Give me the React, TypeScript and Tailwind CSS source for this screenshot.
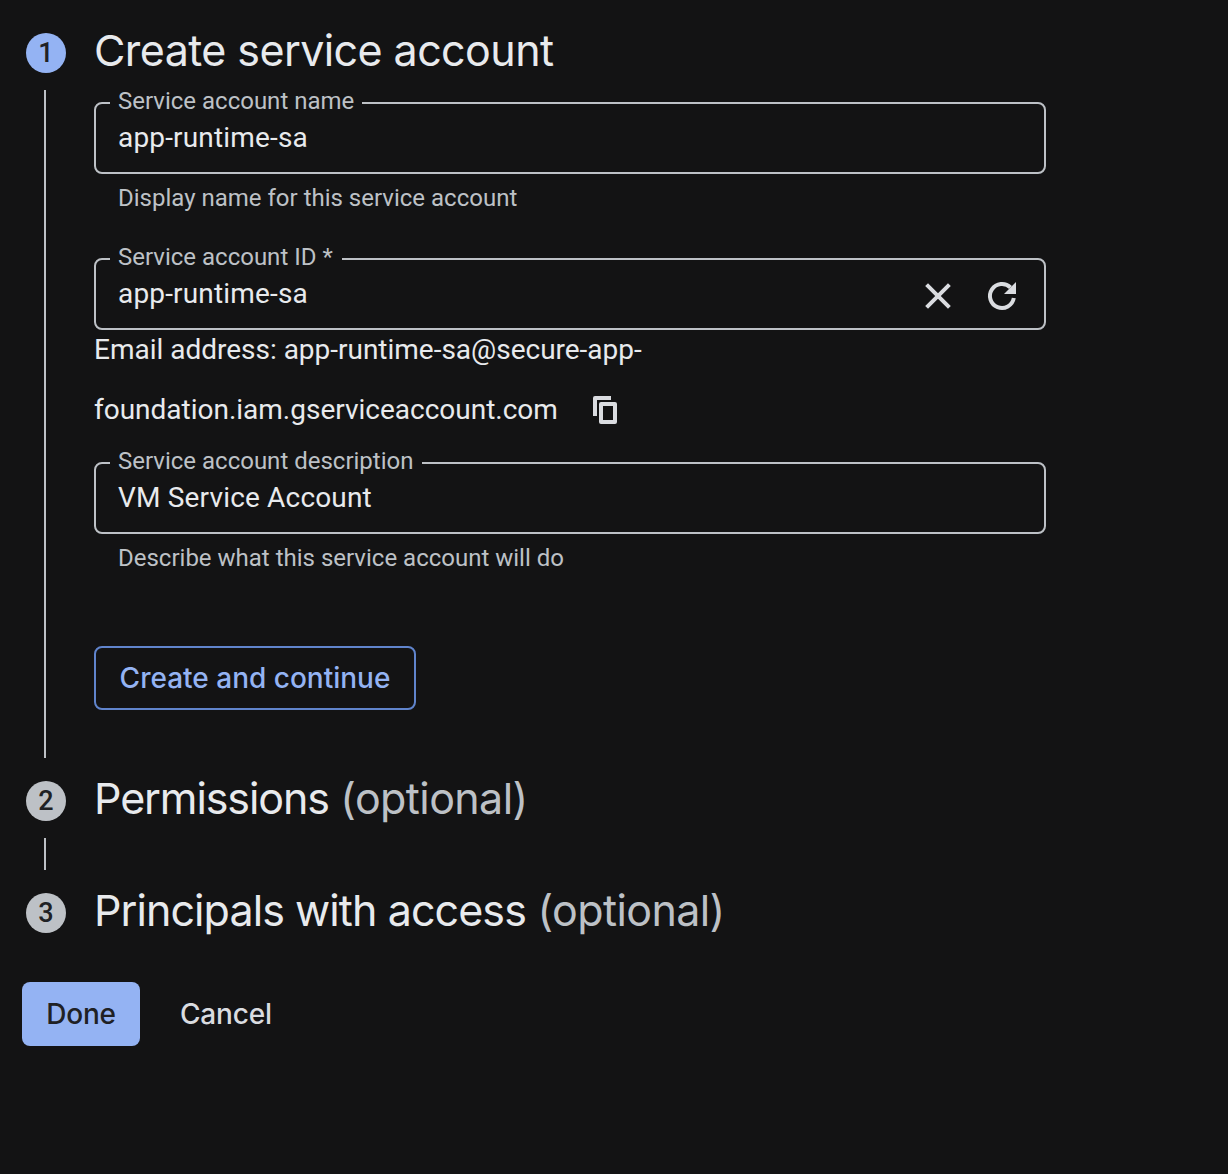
import React from "react";

function StepBadge({ step, active = false }: { step: number; active?: boolean }) {
  return (
    <span
      className={`flex h-10 w-10 items-center justify-center rounded-full text-[27px] font-medium leading-none text-[#202124] ${
        active ? "bg-[#94b3f3]" : "bg-[#bdc1c6]"
      }`}
    >
      {step}
    </span>
  );
}

function Step({
  step,
  title,
  optional = false,
  active = false,
  connector,
  tracking,
  children,
}: {
  step: number;
  title: string;
  optional?: boolean;
  active?: boolean;
  connector?: string;
  tracking: string;
  children?: React.ReactNode;
}) {
  return (
    <section className="flex">
      <div className="flex w-[94px] shrink-0 flex-col pt-[11px] pl-[26px]">
        <StepBadge step={step} active={active} />
        {connector && <div className={`mt-[17px] ml-[18px] w-[2px] bg-[#bdc1c6] ${connector}`} />}
      </div>
      <div>
        <h2
          className={`font-[Inter,sans-serif] text-[43px] leading-[56px] font-normal whitespace-nowrap text-[#e8eaed] ${tracking}`}
        >
          {title}
          {optional && <span className="tracking-[-0.6px] text-[#bdc1c6]"> (optional)</span>}
        </h2>
        {children}
      </div>
    </section>
  );
}

function Field({ label, value, notch, children }: { label: string; value: string; notch: string; children?: React.ReactNode }) {
  return (
    <fieldset className="flex h-[83px] w-[952px] items-start rounded-lg border-2 border-[#bdc1c6] pr-6 pl-[14px]">
      <legend className={`h-6 pl-2 text-2xl leading-5 whitespace-nowrap text-[#bdc1c6] ${notch}`}>{label}</legend>
      <span className="flex-1 pl-2 text-[28px] leading-[46px] tracking-[0.17px] text-[#e8eaed]">{value}</span>
      {children}
    </fieldset>
  );
}

function Hint({ children }: { children: React.ReactNode }) {
  return <p className="mt-3 pl-6 text-2xl leading-6 text-[#bdc1c6]">{children}</p>;
}

function ClearIcon() {
  return (
    <svg width="36" height="36" viewBox="0 0 36 36" fill="none" stroke="#dadce0" strokeWidth="4">
      <path d="M6.6 6.6 29.4 29.4M29.4 6.6 6.6 29.4" />
    </svg>
  );
}

function RefreshIcon() {
  return (
    <svg width="36" height="36" viewBox="0 0 36 36" fill="none">
      <path d="M29.8 20A12 12 0 1 1 26.5 9.5" stroke="#dadce0" strokeWidth="4" />
      <path d="M32 4V16H20Z" fill="#dadce0" />
    </svg>
  );
}

function CopyIcon() {
  return (
    <svg width="36" height="36" viewBox="0 0 36 36" fill="none" stroke="#dadce0" strokeWidth="4" strokeLinejoin="round">
      <path d="M24 6H8V24" />
      <rect x="14" y="12" width="14" height="18" />
    </svg>
  );
}

export default function App() {
  return (
    <main className="h-[1174px] w-[1228px] overflow-hidden bg-[#131314] pt-[22px] font-[Roboto,sans-serif]">
      <Step step={1} title="Create service account" active connector="h-[668px]" tracking="tracking-[-0.58px]">
        <div className="mt-[13px]">
          <Field label="Service account name" value="app-runtime-sa" notch="w-[252px]" />
          <Hint>Display name for this service account</Hint>
        </div>
        <div className="mt-[37px]">
          <Field label="Service account ID *" value="app-runtime-sa" notch="w-[232px]">
            <div className="flex h-[50px] items-center gap-7">
              <button aria-label="Clear">
                <ClearIcon />
              </button>
              <button aria-label="Generate new ID">
                <RefreshIcon />
              </button>
            </div>
          </Field>
        </div>
        <div className="-mt-[10px] text-[28px] leading-[60px] tracking-[-0.01px] text-[#e8eaed]">
          <p>Email address: app-runtime-sa@secure-app-</p>
          <div className="flex items-center gap-[29px]">
            <span>foundation.iam.gserviceaccount.com</span>
            <button aria-label="Copy email address">
              <CopyIcon />
            </button>
          </div>
        </div>
        <div className="mt-[11px]">
          <Field label="Service account description" value="VM Service Account" notch="w-[312px]" />
          <Hint>Describe what this service account will do</Hint>
        </div>
        <button className="mt-[76px] flex h-16 w-[322px] items-center justify-center rounded-lg border-2 border-[#6084cc] font-[Inter,sans-serif] text-[28px] font-medium whitespace-nowrap text-[#94b3f3]">
          Create and continue
        </button>
        <div className="h-[60px]" />
      </Step>
      <Step step={2} title="Permissions" optional connector="h-8" tracking="tracking-[-1.1px]" />
      <div className="h-3" />
      <Step step={3} title="Principals with access" optional tracking="tracking-[-0.92px]" />
      <div className="mt-11 ml-[22px] flex h-16 items-center font-[Inter,sans-serif] text-[28px] font-medium tracking-[-0.2px]">
        <button className="h-16 w-[118px] rounded-lg bg-[#94b3f3] text-[#202124]">Done</button>
        <button className="ml-10 text-[#dadce0]">Cancel</button>
      </div>
    </main>
  );
}
